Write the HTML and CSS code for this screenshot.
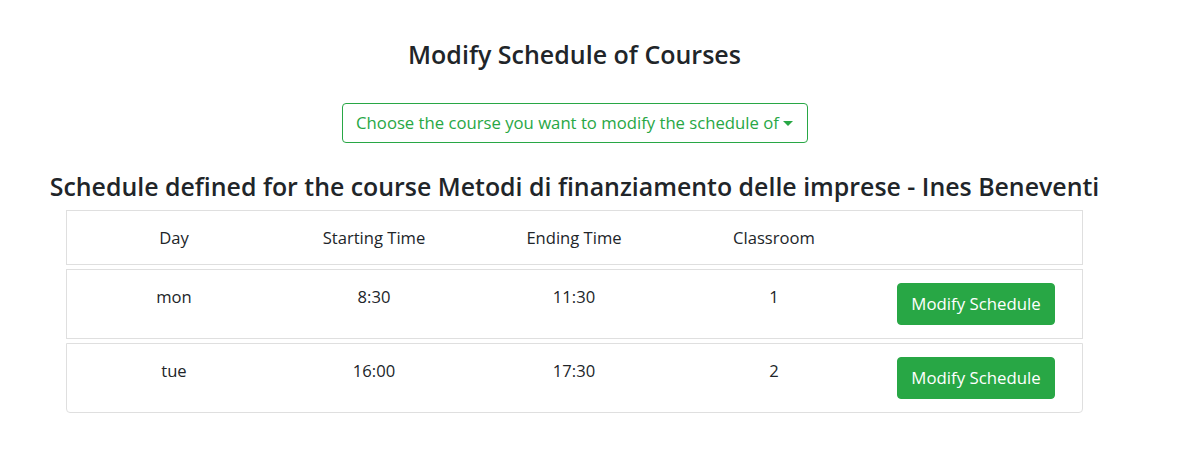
FILE: index.html
```html
<!DOCTYPE html>
<html lang="en">
<head>
<meta charset="utf-8">
<title>Modify Schedule of Courses</title>
<link rel="stylesheet" href="styles.css">
</head>
<body>
<div class="page">
  <h4 class="title">Modify Schedule of Courses</h4>
  <div class="dropdown-wrap">
    <button class="dropdown-toggle" type="button">Choose the course you want to modify the schedule of<span class="caret"></span></button>
  </div>
  <h4 class="subtitle">Schedule defined for the course Metodi di finanziamento delle imprese - Ines Beneventi</h4>
  <ul class="list-group">
    <li class="list-item header">
      <div class="cell">Day</div>
      <div class="cell">Starting Time</div>
      <div class="cell">Ending Time</div>
      <div class="cell">Classroom</div>
      <div class="cell"></div>
    </li>
    <li class="list-item">
      <div class="cell">mon</div>
      <div class="cell">8:30</div>
      <div class="cell">11:30</div>
      <div class="cell">1</div>
      <div class="cell btn-cell"><button class="btn-success" type="button">Modify Schedule</button></div>
    </li>
    <li class="list-item last">
      <div class="cell">tue</div>
      <div class="cell">16:00</div>
      <div class="cell">17:30</div>
      <div class="cell">2</div>
      <div class="cell btn-cell"><button class="btn-success" type="button">Modify Schedule</button></div>
    </li>
  </ul>
</div>
</body>
</html>
```

FILE: styles.css
```css
* { box-sizing: border-box; }
html, body { margin: 0; padding: 0; background: #fff; }
body {
  font-family: "Open Sans", "Noto Sans", sans-serif;
  font-size: 16.6px;
  line-height: 24px;
  color: #212529;
}
.page {
  width: 1149px;
  padding-top: 38px;
}
.title, .subtitle {
  margin: 0;
  text-align: center;
  font-size: 25px;
  font-weight: 600;
  line-height: 32px;
  color: #212529;
}
.subtitle { font-size: 24.9px; }
.dropdown-wrap {
  display: flex;
  justify-content: center;
  margin-top: 33px;
}
.dropdown-toggle {
  width: 466px;
  height: 40px;
  border: 1px solid #28a745;
  border-radius: 4px;
  background: #fff;
  color: #28a745;
  font-family: inherit;
  font-size: 16.7px;
  line-height: 24px;
  padding: 0 10px;
  display: flex;
  align-items: center;
  justify-content: center;
  white-space: nowrap;
}
.caret {
  display: inline-block;
  margin-left: 4px;
  width: 0;
  height: 0;
  border-top: 5px solid #28a745;
  border-left: 5px solid transparent;
  border-right: 5px solid transparent;
}
.subtitle { margin-top: 27px; }
.list-group {
  list-style: none;
  margin: 8px 66px 0;
  padding: 0;
  display: flex;
  flex-direction: column;
  gap: 4px;
}
.list-item {
  display: grid;
  grid-template-columns: repeat(5, 200px);
  border: 1px solid #dfdfdf;
  padding: 13px 7px 13px;
  height: 70px;
}
.list-item.header {
  height: 55px;
  padding: 15px 7px;
}
.list-item.last { border-radius: 0 0 4px 4px; }
.cell {
  text-align: center;
  padding-top: 2px;
}
.header .cell { padding-top: 0; }
.btn-cell { padding-top: 0; padding-left: 4px; }
.btn-success {
  width: 158px;
  height: 42px;
  background: #28a745;
  color: #fff;
  border: 1px solid #28a745;
  border-radius: 4px;
  font-family: inherit;
  font-size: 16.8px;
  line-height: 24px;
  padding: 0 8px;
  white-space: nowrap;
}
```
